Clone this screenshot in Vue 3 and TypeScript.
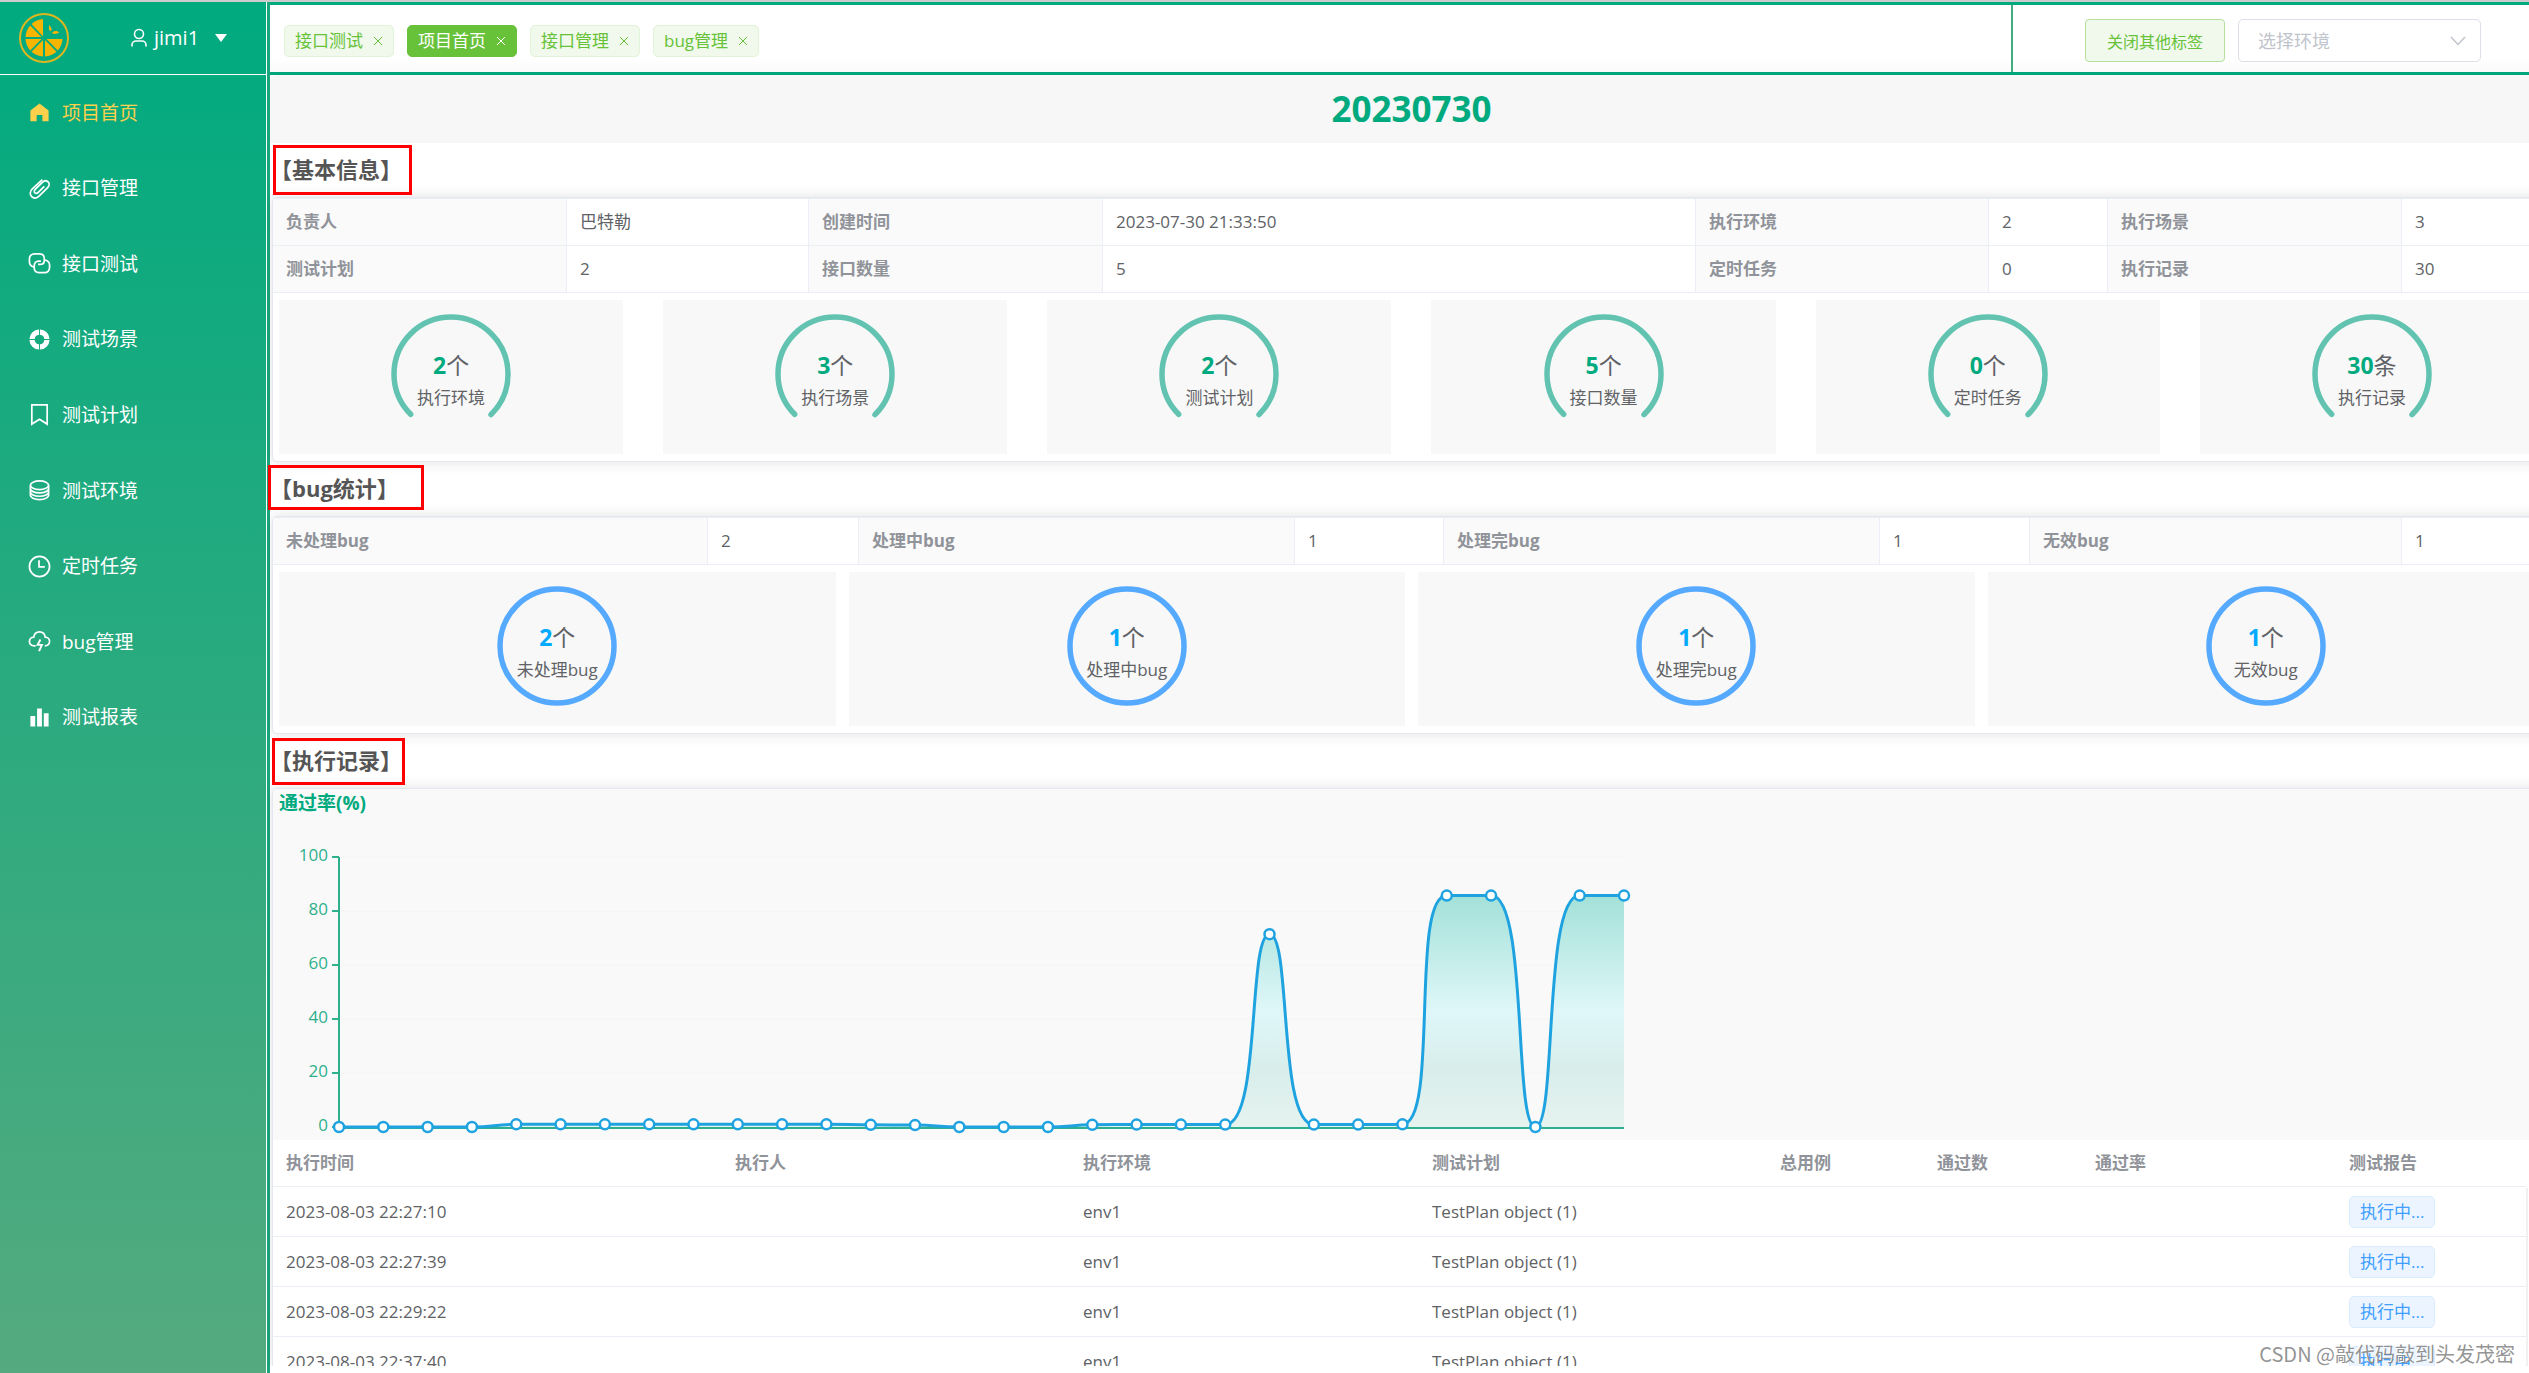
<script setup lang="ts">
import { ref } from 'vue'

interface NavItem { label: string; icon: string; active?: boolean }
interface Gauge { value: number; unit: string; label: string }

const navItems: NavItem[] = [
  { label: '项目首页', icon: 'home', active: true },
  { label: '接口管理', icon: 'clip' },
  { label: '接口测试', icon: 'link' },
  { label: '测试场景', icon: 'ring' },
  { label: '测试计划', icon: 'mark' },
  { label: '测试环境', icon: 'coin' },
  { label: '定时任务', icon: 'clock' },
  { label: 'bug管理', icon: 'cloud' },
  { label: '测试报表', icon: 'bars' },
]

const tabs = ['接口测试', '项目首页', '接口管理', 'bug管理']
const activeTab = ref('项目首页')
const env = ref('')

const infoRows = [
  [['负责人', '巴特勒'], ['创建时间', '2023-07-30 21:33:50'], ['执行环境', '2'], ['执行场景', '3']],
  [['测试计划', '2'], ['接口数量', '5'], ['定时任务', '0'], ['执行记录', '30']],
]
const infoCols = [294, 242, 294, 593, 293, 119, 294, 150]

const infoGauges: Gauge[] = [
  { value: 2, unit: '个', label: '执行环境' },
  { value: 3, unit: '个', label: '执行场景' },
  { value: 2, unit: '个', label: '测试计划' },
  { value: 5, unit: '个', label: '接口数量' },
  { value: 0, unit: '个', label: '定时任务' },
  { value: 30, unit: '条', label: '执行记录' },
]

const bugGauges: Gauge[] = [
  { value: 2, unit: '个', label: '未处理bug' },
  { value: 1, unit: '个', label: '处理中bug' },
  { value: 1, unit: '个', label: '处理完bug' },
  { value: 1, unit: '个', label: '无效bug' },
]
const bugCols = [435, 151, 436, 149, 436, 150, 372, 150]

const recordHeads = ['执行时间', '执行人', '执行环境', '测试计划', '总用例', '通过数', '通过率', '测试报告']
const recordCols = [449, 348, 349, 348, 157, 158, 254, 190]
const records = ['2023-08-03 22:27:10', '2023-08-03 22:27:39', '2023-08-03 22:29:22', '2023-08-03 22:37:40']

// pass-rate chart
const rates = [0, 0, 0, 0, 1, 1, 1, 1, 1, 1, 1, 1, 0.8, 0.7, 0, 0, 0, 0.8, 0.9, 0.9, 0.9, 71.43, 0.9, 0.9, 1, 85.71, 85.71, 0, 85.71, 85.71]
const plot = { left: 66, right: 1351, top: 68, bottom: 338 }
const ticks = [0, 20, 40, 60, 80, 100]
const yOf = (v: number): number => plot.bottom - (v / 100) * (plot.bottom - plot.top)
const points = rates.map((v, i) => ({
  x: plot.left + (i * (plot.right - plot.left)) / (rates.length - 1),
  y: yOf(v),
}))

const clamp = (v: number, a: number, b: number): number => Math.max(Math.min(v, Math.max(a, b)), Math.min(a, b))

// smooth curve whose control points never leave the span of neighbouring points
function smoothPath(): string {
  let d = `M${points[0].x},${points[0].y}`
  let cx = points[0].x
  let cy = points[0].y
  for (let i = 1; i < points.length; i++) {
    const p = points[i - 1]
    const c = points[i]
    const n = points[i + 1]
    if (!n) {
      d += `C${cx},${cy} ${c.x},${c.y} ${c.x},${c.y}`
      break
    }
    const lp = Math.hypot(c.x - p.x, c.y - p.y)
    const ln = Math.hypot(n.x - c.x, n.y - c.y)
    const ratio = ln / (ln + lp)
    let nx = clamp(c.x + (n.x - p.x) * 0.5 * ratio, n.x, c.x)
    let ny = clamp(c.y + (n.y - p.y) * 0.5 * ratio, n.y, c.y)
    const px = clamp(c.x - ((nx - c.x) * lp) / ln, p.x, c.x)
    const py = clamp(c.y - ((ny - c.y) * lp) / ln, p.y, c.y)
    nx = c.x + ((c.x - px) * ln) / lp
    ny = c.y + ((c.y - py) * ln) / lp
    d += `C${cx},${cy} ${px},${py} ${c.x},${c.y}`
    cx = nx
    cy = ny
  }
  return d
}
const linePath = smoothPath()
const areaPath = `${linePath}L${plot.right},${plot.bottom}L${plot.left},${plot.bottom}Z`
</script>

<template>
  <div class="app">
    <aside class="side">
      <div class="brand">
        <svg class="logo" viewBox="0 0 52 52" aria-hidden="true">
          <circle cx="26" cy="26" r="24" fill="none" stroke="#deb71e" stroke-width="2" />
          <g fill="#f7b500">
            <path d="M25 24.500V7A19 19 0 0 0 13.500 12Z" />
            <path d="M23.500 25L12.200 13.500A19 19 0 0 0 7.500 25Z" />
            <path d="M23.500 27H7.500A19 19 0 0 0 12.200 38.500Z" />
            <path d="M25 28L13.500 39.800A19 19 0 0 0 25 44.500Z" />
            <path d="M27 28V44.500A19 19 0 0 0 38.500 39.800Z" />
            <path d="M28.500 27L39.800 38.500A19 19 0 0 0 44.500 27Z" />
          </g>
          <path d="M31 13C33 15 34.500 17 33 19C30.500 19 31 16 31 13ZM34 21C36 18.500 39 18.500 41 20.500C38 22.500 36 22 34 21Z" fill="#f7b500" />
        </svg>
        <button class="user" type="button">
          <svg class="user-icon" viewBox="0 0 18 20" fill="none" stroke="currentColor" stroke-width="1.600" aria-hidden="true">
            <circle cx="9" cy="6" r="4.500" />
            <path d="M2 18.500V17C2 14.500 4 13 6 13H12C14 13 16 14.500 16 17V18.500" />
          </svg>
          <span>jimi1</span>
          <svg class="caret" viewBox="0 0 12 8" aria-hidden="true"><path d="M0 0H12L6 8Z" fill="currentColor" /></svg>
        </button>
      </div>
      <nav class="nav">
        <a v-for="item in navItems" :key="item.label" href="#" :class="{ active: item.active }">
          <svg class="nav-icon" viewBox="0 0 24 24" fill="none" stroke="currentColor" stroke-width="1.800" aria-hidden="true">
            <path v-if="item.icon === 'home'" d="M2.500 10L12 2.500L21.500 10V21H15V14.500H9V21H2.500Z" fill="currentColor" stroke="none" />
            <path v-else-if="item.icon === 'clip'" d="M15 2.800L4.500 12.500C1.800 15 1.800 18.500 3.800 20.500S9 22.500 11.500 20L20.500 11C22.500 9 22.500 6.500 21 5S17 3.500 15 5.500L7.500 13C6.300 14.200 6.300 15.700 7.200 16.500S9.500 17.200 10.700 16L17 9.700" />
            <g v-else-if="item.icon === 'link'">
              <path d="M6.500 15.500C3.500 15.500 1.500 13 1.500 10.500V7C1.500 4 4 2 6.500 2H12C15 2 17 4 17 7V8.500C17 11.500 15 13 12.500 13H10.500" />
              <path d="M17.500 8.500C20.500 8.500 22.500 11 22.500 13.500V16.500C22.500 19.500 20 21.500 17.500 21.500H11.500C8.500 21.500 6.500 19.500 6.500 16.500V14.500C6.500 11.500 8.500 9.500 11 9.500H13.500" />
            </g>
            <g v-else-if="item.icon === 'ring'" stroke="none">
              <path fill="currentColor" d="M11.500 1.500A10.500 10.500 0 0 0 1.500 11.500H7A5 5 0 0 1 11.500 7ZM12.500 1.500A10.500 10.500 0 0 1 22.500 11.500H17A5 5 0 0 0 12.500 7ZM11.500 22.500A10.500 10.500 0 0 1 1.500 12.500H7A5 5 0 0 0 11.500 17ZM12.500 22.500A10.500 10.500 0 0 0 22.500 12.500H17A5 5 0 0 1 12.500 17Z" />
            </g>
            <path v-else-if="item.icon === 'mark'" d="M4 2H20V22L12 17L4 22Z" />
            <g v-else-if="item.icon === 'coin'">
              <ellipse cx="12" cy="6.500" rx="9.500" ry="4.500" />
              <path d="M2.500 6.500V17C2.500 19.500 6.500 21.500 12 21.500S21.500 19.500 21.500 17V6.500M2.500 10C2.500 12.500 6.500 14.500 12 14.500S21.500 12.500 21.500 10M2.500 13.500C2.500 16 6.500 18 12 18S21.500 16 21.500 13.500" />
            </g>
            <g v-else-if="item.icon === 'clock'">
              <circle cx="12" cy="12" r="10.500" />
              <path d="M11.500 5.500V12.500H17.500" />
            </g>
            <g v-else-if="item.icon === 'cloud'">
              <path d="M8 16.500H6.500C3.500 16.500 1.500 14.500 1.500 12S3.500 7.500 6 7.500C6.500 4 9 2 12 2S17.500 4 18 7.500C20.500 7.500 22.500 9.500 22.500 12S20.500 16.500 17.500 16.500" />
              <path d="M13 10L10 15.500H14.500L11.500 22" stroke-width="2" />
            </g>
            <path v-else d="M2.500 10.500H7.500V21.500H2.500ZM9.500 2.500H14.500V21.500H9.500ZM16.500 7.500H21.500V21.500H16.500Z" fill="currentColor" stroke="none" />
          </svg>
          <span>{{ item.label }}</span>
        </a>
      </nav>
    </aside>

    <div class="main">
      <header class="top">
        <div class="tabs">
          <span v-for="t in tabs" :key="t" class="tab" :class="{ on: t === activeTab }" @click="activeTab = t">
            {{ t }}
            <button type="button" class="close" :aria-label="t">
              <svg viewBox="0 0 14 14" aria-hidden="true"><path d="M3 3L11 11M11 3L3 11" stroke="currentColor" stroke-width="1" /></svg>
            </button>
          </span>
        </div>
        <div class="tools">
          <button type="button" class="close-others">关闭其他标签</button>
          <div class="picker">
            <select v-model="env" aria-label="选择环境">
              <option value="">选择环境</option>
              <option value="env1">env1</option>
            </select>
            <svg viewBox="0 0 16 10" aria-hidden="true"><path d="M1 1L8 8.500L15 1" fill="none" stroke="currentColor" stroke-width="1.500" /></svg>
          </div>
        </div>
      </header>

      <main class="body">
        <div class="page">
          <h1>20230730</h1>

          <h2>【基本信息】<i class="frame frame-a"></i></h2>
          <section class="panel">
            <table class="desc">
              <colgroup><col v-for="(w, i) in infoCols" :key="i" :style="{ width: w + 'px' }" /></colgroup>
              <tbody>
                <tr v-for="(row, r) in infoRows" :key="r">
                  <template v-for="pair in row" :key="pair[0]">
                    <th scope="row">{{ pair[0] }}</th>
                    <td>{{ pair[1] }}</td>
                  </template>
                </tr>
              </tbody>
            </table>
            <div class="cards six">
              <div v-for="g in infoGauges" :key="g.label" class="card">
                <div class="gauge">
                  <svg viewBox="0 0 120 120" aria-hidden="true">
                    <circle cx="60" cy="60" r="57" fill="none" stroke="#62c3b1" stroke-width="5.500" stroke-linecap="round" stroke-dasharray="268.600 358.140" transform="rotate(135 60 60)" />
                  </svg>
                  <div class="gauge-text">
                    <div class="num"><b>{{ g.value }}</b>{{ g.unit }}</div>
                    <div class="cap">{{ g.label }}</div>
                  </div>
                </div>
              </div>
            </div>
          </section>

          <h2>【bug统计】<i class="frame frame-b"></i></h2>
          <section class="panel">
            <table class="desc">
              <colgroup><col v-for="(w, i) in bugCols" :key="i" :style="{ width: w + 'px' }" /></colgroup>
              <tbody>
                <tr>
                  <template v-for="g in bugGauges" :key="g.label">
                    <th scope="row">{{ g.label }}</th>
                    <td>{{ g.value }}</td>
                  </template>
                </tr>
              </tbody>
            </table>
            <div class="cards four">
              <div v-for="g in bugGauges" :key="g.label" class="card blue">
                <div class="gauge">
                  <svg viewBox="0 0 120 120" aria-hidden="true">
                    <circle cx="60" cy="60" r="57" fill="none" stroke="#55aaff" stroke-width="5.500" />
                  </svg>
                  <div class="gauge-text">
                    <div class="num"><b>{{ g.value }}</b>{{ g.unit }}</div>
                    <div class="cap">{{ g.label }}</div>
                  </div>
                </div>
              </div>
            </div>
          </section>

          <h2>【执行记录】<i class="frame frame-c"></i></h2>
          <section class="panel last">
            <div class="chart">
              <h3>通过率(%)</h3>
              <svg class="plot" width="1400" height="319" viewBox="0 32 1400 319" role="img" aria-label="通过率(%)">
                <defs>
                  <linearGradient id="rateFill" x1="0" y1="0" x2="0" y2="1">
                    <stop offset="0" stop-color="#a3e1d8" />
                    <stop offset="0.500" stop-color="#dff7f9" />
                    <stop offset="0.750" stop-color="#d8eeeb" />
                    <stop offset="1" stop-color="#e6f3ef" />
                  </linearGradient>
                </defs>
                <line v-for="t in ticks" :key="'g' + t" :x1="plot.left" :x2="plot.right" :y1="yOf(t)" :y2="yOf(t)" stroke="#f2f6f5" stroke-width="1" />
                <path :d="areaPath" fill="url(#rateFill)" />
                <g stroke="#2fb08c" stroke-width="2">
                  <line :x1="plot.left" :x2="plot.left" :y1="plot.top" :y2="plot.bottom" />
                  <line :x1="plot.left" :x2="plot.right" :y1="plot.bottom + 1" :y2="plot.bottom + 1" />
                  <line v-for="t in ticks" :key="'t' + t" :x1="plot.left - 7" :x2="plot.left" :y1="yOf(t)" :y2="yOf(t)" />
                </g>
                <text v-for="t in ticks" :key="'l' + t" class="tick" x="55" :y="yOf(t) + 4" text-anchor="end">{{ t }}</text>
                <path :d="linePath" fill="none" stroke="#1fa3e0" stroke-width="3" />
                <circle v-for="(p, i) in points" :key="i" :cx="p.x" :cy="p.y" r="5" fill="#fff" stroke="#1fa3e0" stroke-width="2.500" />
              </svg>
            </div>
            <div class="records">
              <table>
                <colgroup><col v-for="(w, i) in recordCols" :key="i" :style="{ width: w + 'px' }" /></colgroup>
                <thead>
                  <tr><th v-for="h in recordHeads" :key="h" scope="col">{{ h }}</th></tr>
                </thead>
                <tbody>
                  <tr v-for="time in records" :key="time">
                    <td>{{ time }}</td>
                    <td></td>
                    <td>env1</td>
                    <td>TestPlan object (1)</td>
                    <td></td>
                    <td></td>
                    <td></td>
                    <td><span class="state">执行中...</span></td>
                  </tr>
                </tbody>
              </table>
              <div class="track"><div class="thumb"></div></div>
            </div>
          </section>
        </div>
      </main>
    </div>
    <div class="credit">CSDN @敲代码敲到头发茂密</div>
  </div>
</template>

<style>
body {
  margin: 0;
  overflow: hidden;
}
</style>

<style scoped>
* {
  box-sizing: border-box;
}
.app {
  position: relative;
  display: flex;
  height: 100vh;
  border-top: 2px solid #cccccc;
  background: #ffffff;
  color: #606266;
  font: 17px/24px "Open Sans", "Noto Sans CJK SC", sans-serif;
}
button,
select {
  font-family: inherit;
}
button {
  margin: 0;
  padding: 0;
  border: 0;
  background: none;
  color: inherit;
  cursor: pointer;
}

/* sidebar */
.side {
  flex: 0 0 270px;
  border-right: 3px solid #1aa57d;
  background: linear-gradient(#00aa7f, #55aa7f);
  color: #ffffff;
  box-shadow: inset -1px 0 #ffffff;
}
.brand {
  display: flex;
  align-items: center;
  height: 73px;
  padding-left: 18px;
  border-bottom: 1px solid #ffffff;
}
.logo {
  width: 52px;
  height: 52px;
}
.user {
  display: flex;
  align-items: center;
  margin-left: 60px;
  font-size: 20px;
  line-height: 28px;
}
.user-icon {
  width: 18px;
  height: 20px;
  margin-right: 6px;
}
.caret {
  width: 12px;
  height: 8px;
  margin-left: 16px;
}
.nav {
  display: grid;
  grid-auto-rows: 1fr;
  height: 680px;
}
.nav a {
  display: flex;
  align-items: center;
  gap: 11px;
  padding-left: 28px;
  color: #ffffff;
  font-size: 19px;
  text-decoration: none;
}
.nav a.active {
  color: #ffd04b;
}
.nav-icon {
  width: 23px;
  height: 23px;
}

/* top bar */
.main {
  display: flex;
  flex: 1;
  flex-direction: column;
  min-width: 0;
  padding-bottom: 7px;
}
.top {
  display: flex;
  flex: 0 0 73px;
  border-top: 3px solid #00aa7f;
  border-bottom: 3px solid #00a57b;
  background: linear-gradient(#ffffff 80%, #fafafa);
}
.tabs {
  display: flex;
  flex: 1;
  align-items: center;
  gap: 13px;
  padding: 4px 0 0 14px;
}
.tab {
  display: flex;
  align-items: center;
  gap: 8px;
  height: 32px;
  padding: 0 8px 0 10px;
  border: 1px solid #e1f3d8;
  border-radius: 5px;
  background: #f0f9eb;
  color: #67c23a;
  font-size: 17px;
}
.tab.on {
  border-color: #67c23a;
  background: #67c23a;
  color: #ffffff;
}
.close,
.close svg {
  display: block;
  width: 14px;
  height: 14px;
}
.tools {
  display: flex;
  flex: 0 0 518px;
  align-items: center;
  justify-content: flex-end;
  gap: 13px;
  padding: 4px 48px 0 0;
  border-left: 2px solid #44aa7f;
}
.close-others {
  width: 140px;
  height: 43px;
  border: 1px solid #b3e19d;
  border-radius: 4px;
  background: #f0f9eb;
  color: #67c23a;
  font-size: 16px;
}
.picker {
  position: relative;
  width: 243px;
  color: #c0c4cc;
}
.picker select {
  display: block;
  width: 100%;
  height: 43px;
  padding: 0 19px;
  border: 1px solid #dcdfe6;
  border-radius: 5px;
  background: #ffffff;
  color: inherit;
  font-size: 18px;
  appearance: none;
}
.picker svg {
  position: absolute;
  top: 17px;
  right: 15px;
  width: 16px;
  height: 10px;
  pointer-events: none;
}

/* page */
.body {
  display: flex;
  flex: 1;
  min-height: 0;
  overflow: hidden;
}
.page {
  display: flex;
  flex: 0 0 calc(100% + 24px);
  flex-direction: column;
  min-width: 0;
}
h1 {
  flex: none;
  margin: 0;
  border-top-left-radius: 6px;
  background: #f7f7f7;
  color: #00aa7f;
  font-size: 35px;
  line-height: 68px;
  text-align: center;
}
h2 {
  position: relative;
  flex: none;
  margin: 0;
  padding-bottom: 2px;
  color: #555555;
  font-size: 22px;
  line-height: 52px;
}
.frame {
  position: absolute;
  z-index: 1;
  border: 3px solid #ff0000;
}
.frame-a {
  top: 2px;
  left: 3px;
  width: 139px;
  height: 50px;
}
.frame-b {
  top: 3px;
  left: -2px;
  width: 156px;
  height: 45px;
}
.frame-c {
  top: 4px;
  left: 2px;
  width: 133px;
  height: 47px;
}
.body {
  position: relative;
  margin-left: -2px;
  padding-left: 2px;
}
.panel {
  flex: none;
  margin: 0 2px;
  border: 1px solid #e4e7ed;
  border-radius: 5px;
  background: #ffffff;
  box-shadow: 0 0 14px rgba(0, 0, 0, 0.12);
}
.last {
  display: flex;
  flex: 1;
  flex-direction: column;
  min-height: 0;
  overflow: hidden;
  border-bottom: 0;
  border-radius: 5px 5px 0 0;
}
table {
  width: 100%;
  border-spacing: 0;
  table-layout: fixed;
}
th,
td {
  padding: 0 13px;
  text-align: left;
}
th {
  color: #909399;
  font-weight: 700;
}
.desc {
  border-top: 1px solid #ebeef5;
}
.desc th,
.desc td {
  height: 47px;
  border-right: 1px solid #ebeef5;
  border-bottom: 1px solid #ebeef5;
}
.desc th {
  background: #fafafa;
}

/* gauges */
.cards {
  display: grid;
  padding: 7px 6px;
}
.six {
  grid-template-columns: repeat(6, 1fr);
  column-gap: 40px;
}
.four {
  grid-template-columns: repeat(4, 1fr);
  column-gap: 13px;
}
.card {
  height: 154px;
  padding-top: 14px;
  background: #f8f8f8;
}
.gauge {
  position: relative;
  width: 120px;
  height: 120px;
  margin: 0 auto;
}
.gauge svg {
  display: block;
  width: 100%;
  height: 100%;
}
.gauge-text {
  position: absolute;
  inset: 0;
  padding-top: 36px;
  text-align: center;
  white-space: nowrap;
}
.num {
  font-size: 23px;
  line-height: 30px;
}
.num b {
  color: #00aa7f;
}
.blue .num b {
  color: #00aaff;
}
.cap {
  margin-top: 6px;
}

/* chart */
.chart {
  flex: none;
  height: 351px;
  background: #f9f9f9;
}
h3 {
  margin: 0;
  padding: 0 0 4px 6px;
  color: #00aa7f;
  font-size: 19px;
  line-height: 28px;
}
.plot {
  display: block;
}
.tick {
  fill: #2fb08c;
  font-size: 17px;
}

/* execution records */
.records {
  display: flex;
  flex: 1;
  min-height: 0;
  margin-right: 22px;
  overflow: hidden;
}
.records table {
  flex: 1;
  align-self: flex-start;
}
.records th,
.records td {
  height: 50px;
  border-bottom: 1px solid #ebeef5;
}
.records th {
  height: 47px;
}
.state {
  display: inline-block;
  height: 32px;
  padding: 0 10px;
  border: 1px solid #d9ecff;
  border-radius: 5px;
  background: #ecf5ff;
  color: #409eff;
  line-height: 30px;
  vertical-align: middle;
}
.track {
  flex: 0 0 3px;
  margin-top: 48px;
  padding-top: 24px;
  background: #f1f1f1;
}
.thumb {
  height: 100%;
  margin-left: 2px;
  background: #a8a8a8;
}
.credit {
  position: absolute;
  right: 14px;
  bottom: 5px;
  color: rgba(120, 120, 120, 0.8);
  font-family: "Noto Sans CJK SC", sans-serif;
  font-size: 20px;
  line-height: 28px;
  text-shadow: -1px -1px #ffffff;
}
</style>
